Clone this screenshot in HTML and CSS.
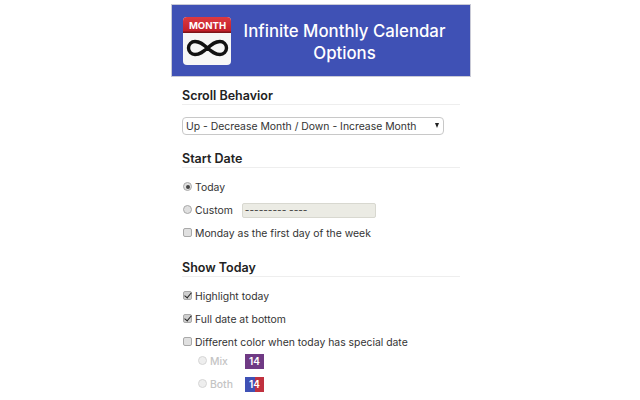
FILE: index.html
```html
<!DOCTYPE html>
<html>
<head>
  <title>Infinite Monthly Calendar Options</title>
  <link rel="stylesheet" href="styles.css">
</head>
<body>
  <div id="options">
    <div class="banner">
      <svg class="logo" width="48" height="48" viewBox="0 0 48 48">
        <defs>
          <linearGradient id="red" x1="0" y1="0" x2="0" y2="1">
            <stop offset="0" stop-color="#dc3a40"/>
            <stop offset="1" stop-color="#c01c26"/>
          </linearGradient>
        </defs>
        <rect x="0" y="0" width="48" height="48" rx="4" fill="#f6f6f6"/>
        <path d="M0 16V4a4 4 0 0 1 4-4h40a4 4 0 0 1 4 4v12z" fill="url(#red)"/>
        <rect x="0" y="14.5" width="48" height="1.5" fill="#7e1418"/>
        <path d="M24.5 31C20 27 17 24.5 12 24.5a6.5 6.5 0 0 0 0 13C17 37.5 20 35 24.5 31S32 24.5 37 24.5a6.5 6.5 0 0 1 0 13C32 37.5 29 35 24.5 31z" fill="none" stroke="#111111" stroke-width="3.4"/>
        <text x="24.5" y="12" class="logo-text" text-anchor="middle">MONTH</text>
      </svg>
      <h1>Infinite Monthly Calendar Options</h1>
    </div>

    <div class="section first">
      <h2>Scroll Behavior</h2>
      <div class="select-wrap">
        <select class="scroll-select">
          <option>Up - Decrease Month / Down - Increase Month</option>
        </select>
        <span class="select-arrow"></span>
      </div>
    </div>

    <div class="section">
      <h2>Start Date</h2>
      <label class="row"><input type="radio" name="start" checked> Today</label>
      <label class="row"><input type="radio" name="start"> Custom <span class="date-field">--------- ----</span></label>
      <label class="row"><input type="checkbox"> Monday as the first day of the week</label>
    </div>

    <div class="section">
      <h2>Show Today</h2>
      <label class="row"><input type="checkbox" checked> Highlight today</label>
      <label class="row"><input type="checkbox" checked> Full date at bottom</label>
      <label class="row"><input type="checkbox"> Different color when today has special date</label>
      <div class="subs">
        <label class="row sub"><input type="radio" name="mix" disabled> <span class="sub-name">Mix</span> <span class="swatch mix">14</span></label>
        <label class="row sub"><input type="radio" name="mix" disabled> <span class="sub-name">Both</span> <span class="swatch both">14</span></label>
      </div>
    </div>
  </div>
</body>
</html>
```

FILE: styles.css
```css
html, body {
  height: 100%;
  overflow: hidden;
}

body {
  font-family: Inter, "Open Sans", sans-serif;
  background-color: #ffffff;
  color: #333333;
  margin: 0;
  padding-top: 4px;
  font-size: 10.4px;
}

#options {
  width: 300px;
  margin-left: 171px;
}

.banner {
  display: flex;
  align-items: center;
  height: 73px;
  padding-left: 11px;
  background-color: #3f51b5;
  border: 1px solid #c9cad6;
  box-sizing: border-box;
}

.logo {
  flex: none;
}

.logo-text {
  font-family: Inter, sans-serif;
  font-size: 9.6px;
  font-weight: 700;
  fill: #ffffff;
}

.banner h1 {
  flex: 1;
  margin: 0;
  padding: 3px 14px 0 2px;
  color: #ffffff;
  font-size: 16.8px;
  font-weight: 500;
  line-height: 22px;
  text-align: center;
}

.section {
  padding: 0 11px;
  margin-top: 14px;
}

.section.first {
  margin-top: 10px;
}

.section h2 {
  margin: 0 0 8px;
  border-bottom: 1px solid #eeeeee;
  color: #222222;
  font-size: 12.5px;
  font-weight: 600;
  line-height: 17px;
}

.first h2 {
  margin-bottom: 12px;
}

.select-wrap {
  position: relative;
  width: 262px;
  margin-bottom: 15px;
}

.scroll-select {
  display: block;
  width: 100%;
  height: 18px;
  padding: 0 0 0 3px;
  border: 1px solid #c8c8c8;
  border-radius: 4px;
  background-color: #ffffff;
  color: #333333;
  font-family: inherit;
  font-size: 10.4px;
  appearance: none;
}

.select-arrow {
  position: absolute;
  top: 6px;
  right: 5px;
  border-top: 5px solid #222222;
  border-left: 2.5px solid transparent;
  border-right: 2.5px solid transparent;
}

.row {
  display: flex;
  align-items: center;
  height: 23px;
}

.row input {
  position: relative;
  top: -1px;
  flex: none;
  width: 7px;
  height: 7px;
  margin: 0 3px 0 1px;
  border: 1px solid #a9a9a9;
  background-color: #e0e0e0;
  box-sizing: content-box;
  appearance: none;
}

.row input[type="radio"] {
  border-radius: 50%;
}

.row input[type="checkbox"] {
  border-radius: 2px;
}

.row input[type="checkbox"]:checked {
  background-color: #cfcfcf;
}

.row input[type="radio"]:checked::after {
  content: "";
  position: absolute;
  top: 1.5px;
  left: 1.5px;
  width: 4px;
  height: 4px;
  border-radius: 50%;
  background-color: #444444;
}

.row input[type="checkbox"]:checked::after {
  content: "";
  position: absolute;
  top: -1px;
  left: 1.5px;
  width: 3px;
  height: 6px;
  border-right: 1.8px solid #222222;
  border-bottom: 1.8px solid #222222;
  transform: rotate(40deg);
}

.row input:disabled {
  border-color: #d6d6d6;
  background-color: #eeeeee;
}

.date-field {
  width: 134px;
  height: 15px;
  margin-left: 9px;
  padding-left: 2px;
  border: 1px solid #d8d8d0;
  border-radius: 2px;
  background-color: #ebebe4;
  box-sizing: border-box;
  font-size: 10px;
  line-height: 13px;
}

.subs {
  margin-top: -4px;
}

.sub {
  padding-left: 15px;
  color: #c4c4c4;
  font-weight: 500;
}

.sub-name {
  width: 35px;
}

.swatch {
  display: block;
  width: 19px;
  height: 15px;
  color: #ffffff;
  font-size: 10px;
  font-weight: 600;
  line-height: 15px;
  text-align: center;
}

.mix {
  background-color: #6f3a84;
}

.both {
  background: linear-gradient(to right, #3f51b5 52%, #c0313f 52%);
}
```
